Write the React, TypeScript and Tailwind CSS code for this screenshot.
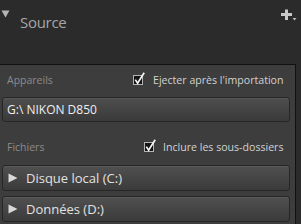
import React from "react";

function Check() {
  return (
    <svg width="14" height="16" viewBox="0 0 14 16" className="shrink-0">
      <rect x="0.5" y="3.5" width="9" height="9" fill="#141414" stroke="#b4b4b4" />
      <path d="M2.3 7.6 L4.6 11.2 L11.2 0.8" fill="none" stroke="#f4f4f4" strokeWidth="1.7" />
    </svg>
  );
}

function Tri() {
  return (
    <svg width="10" height="10" viewBox="0 0 10 10" className="shrink-0">
      <path d="M0.5 0.5 L9.5 5 L0.5 9.5 Z" fill="#d8d8d8" />
    </svg>
  );
}

function FolderButton({ label }: { label: string }) {
  return (
    <div className="h-[26px] mx-[2px] w-[288px] rounded-[3px] border border-[#262626] bg-gradient-to-b from-[#505050] to-[#3b3b3b] shadow-[inset_0_1px_0_#5a5a5a] flex items-center pl-[5px] gap-[8px]">
      <Tri />
      <span className="text-[13px] text-[#e2e2e2] leading-none">{label}</span>
    </div>
  );
}

export default function App() {
  return (
    <div
      className="w-[301px] h-[224px] overflow-hidden bg-[#2b2b2b] flex flex-col"
      style={{ fontFamily: '"Open Sans", "Noto Sans", sans-serif' }}
    >
      <div className="h-[64px] shrink-0 flex items-start relative">
        <svg width="10" height="9" viewBox="0 0 10 9" className="mt-[10px] ml-[1px]">
          <path d="M0.5 0.5 L8.5 0.5 L4.5 7.5 Z" fill="#b4b4b4" />
        </svg>
        <span className="ml-[9px] mt-[15px] text-[15px] tracking-[-0.3px] leading-none text-[#a6a6a6]">Source</span>
        <svg width="18" height="14" viewBox="0 0 18 14" className="absolute left-[281px] top-[9px]">
          <path d="M5.5 0.5 V11 M0 5.5 H11" stroke="#c8c8c8" strokeWidth="3" />
          <path d="M11.5 9 L15.5 9 L13.5 11.5 Z" fill="#bdbdbd" />
        </svg>
      </div>
      <div className="w-[296px] flex-1 bg-[#3d3d3d] border-t border-r border-[#111111] flex flex-col pt-[5px]">
        <div className="h-[20px] flex items-center">
          <span className="w-[133px] pl-[7px] text-[10.5px] text-[#8c8c8c] leading-none">Appareils</span>
          <Check />
          <span className="ml-[6px] text-[10.6px] text-[#d2d2d2] leading-none">Ejecter après l'importation</span>
        </div>
        <div className="mt-[7px] h-[25px] mx-[2px] w-[288px] rounded-[3px] border border-[#262626] bg-gradient-to-b from-[#4e4e4e] to-[#3a3a3a] shadow-[inset_0_1px_0_#575757] flex items-center pl-[4px] pt-[1px]">
          <span className="text-[12px] font-medium text-[#efefef] leading-none">G:\ NIKON D850</span>
        </div>
        <div className="mt-[15px] h-[20px] flex items-center">
          <span className="w-[144px] pl-[7px] text-[10.5px] text-[#8c8c8c] leading-none">Fichiers</span>
          <Check />
          <span className="ml-[5px] text-[10.6px] text-[#d2d2d2] leading-none">Inclure les sous-dossiers</span>
        </div>
        <div className="mt-[8px] flex flex-col gap-[5px]">
          <FolderButton label="Disque local (C:)" />
          <FolderButton label="Données (D:)" />
        </div>
      </div>
    </div>
  );
}
